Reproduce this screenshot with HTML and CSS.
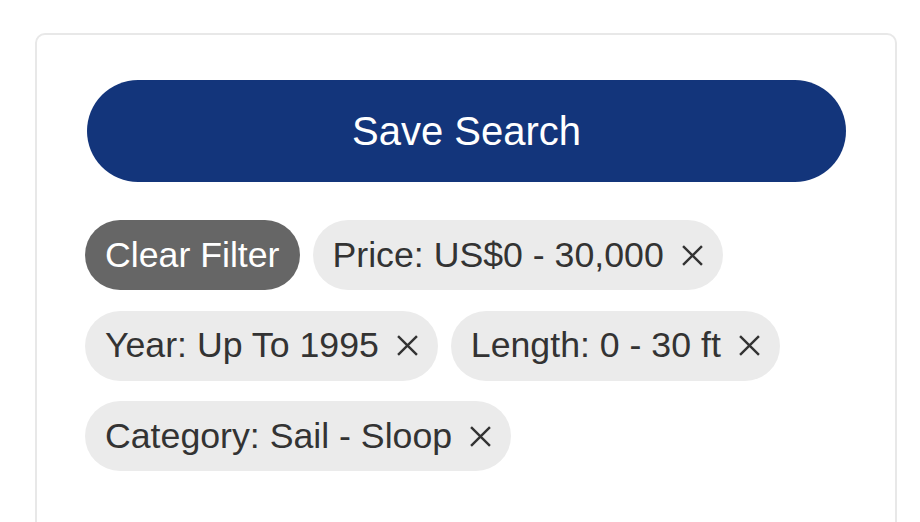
FILE: index.html
```html
<!DOCTYPE html>
<html lang="en">
<head>
    <meta charset="UTF-8">
    <meta name="viewport" content="width=device-width, initial-scale=1.0">
    <title>Saved Filters</title>
    <link rel="stylesheet" href="styles.css">
</head>
<body>
    <div class="page">
        <div class="filter-card">
            <button class="save-search">Save Search</button>
            <div class="chips">
                <button class="chip chip-clear">Clear Filter</button>
                <span class="chip">Price: US$0 - 30,000
                    <svg class="chip-x" viewBox="0 0 20 20"><path d="M1 1L19 19M19 1L1 19"/></svg>
                </span>
                <span class="chip">Year: Up To 1995
                    <svg class="chip-x" viewBox="0 0 20 20"><path d="M1 1L19 19M19 1L1 19"/></svg>
                </span>
                <span class="chip">Length: 0 - 30 ft
                    <svg class="chip-x" viewBox="0 0 20 20"><path d="M1 1L19 19M19 1L1 19"/></svg>
                </span>
                <span class="chip">Category: Sail - Sloop
                    <svg class="chip-x" viewBox="0 0 20 20"><path d="M1 1L19 19M19 1L1 19"/></svg>
                </span>
            </div>
        </div>
    </div>
</body>
</html>
```

FILE: styles.css
```css
body {
    margin: 0;
    background-color: #fff;
    font-family: 'Liberation Sans', Arial, sans-serif;
    color: #333;
    height: 522px;
    overflow: hidden;
}

.page {
    padding: 33px 23px 0 35px;
}

.filter-card {
    border: 2px solid #e8e8e8;
    border-radius: 10px;
    padding: 45px 48px;
    min-height: 560px;
    box-sizing: border-box;
}

.save-search {
    display: block;
    width: calc(100% - 3px);
    margin: 0 1px 0 2px;
    height: 102px;
    border: none;
    border-radius: 51px;
    background-color: #13357b;
    color: #fff;
    font-family: inherit;
    font-size: 40px;
    cursor: pointer;
}

.chips {
    margin-top: 38px;
    display: flex;
    flex-wrap: wrap;
    gap: 20.5px 13px;
}

.chip {
    display: inline-flex;
    align-items: center;
    height: 70px;
    padding: 0 20px;
    border: none;
    border-radius: 35px;
    background-color: #ebebeb;
    color: #333;
    font-family: inherit;
    font-size: 35.7px;
    white-space: nowrap;
    box-sizing: border-box;
}

.chip-clear {
    background-color: #666;
    color: #fff;
    padding: 0 20px;
    cursor: pointer;
}

.chip-x {
    width: 21px;
    height: 21px;
    margin-left: 18px;
    fill: none;
    stroke: #333;
    stroke-width: 2.3;
    cursor: pointer;
}
```
